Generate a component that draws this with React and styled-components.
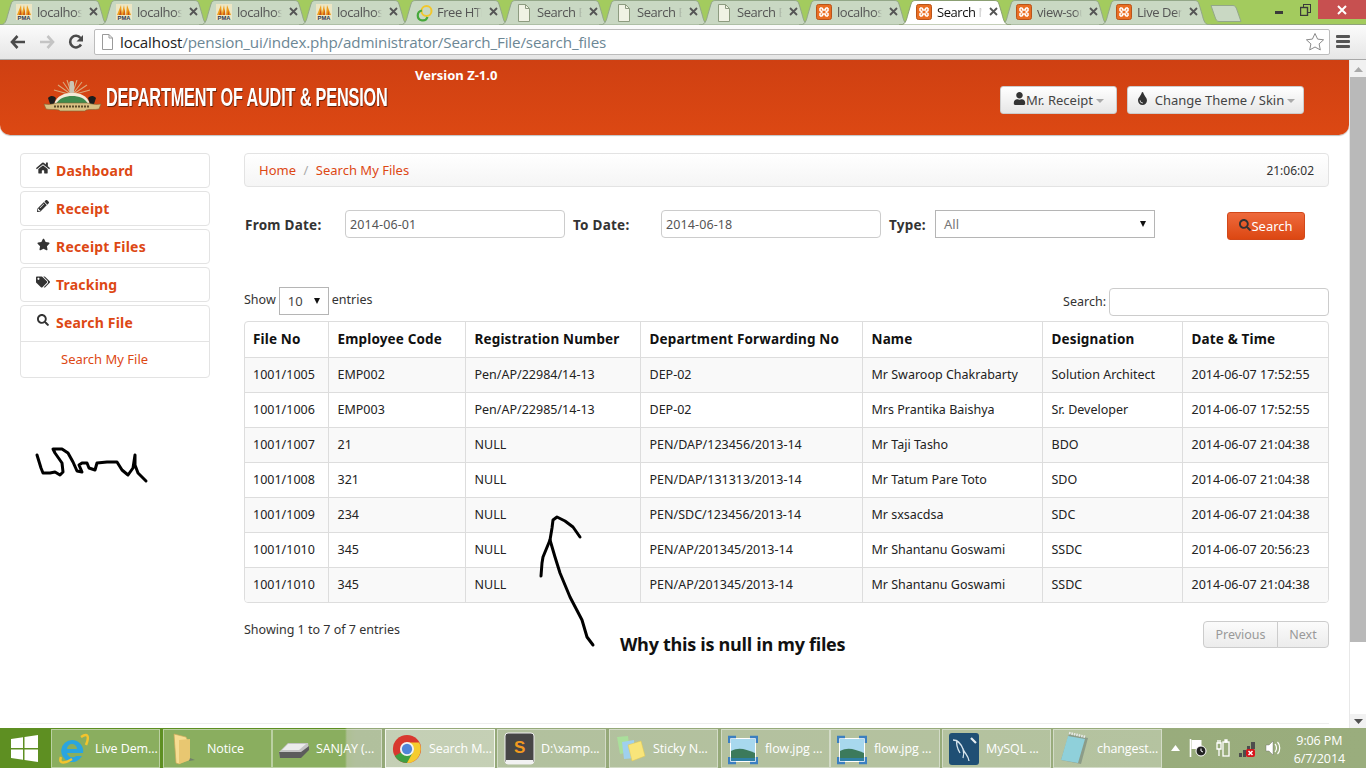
import React from "react";
import styled, { createGlobalStyle } from "styled-components";
import { FaHome, FaPencilAlt, FaStar, FaTags, FaSearch, FaUser, FaTint } from "react-icons/fa";

const Global = createGlobalStyle`
  html, body { margin: 0; padding: 0; background: #fff; overflow: hidden; }
  * { box-sizing: border-box; }
  body { font-family: "Noto Sans", "Open Sans", sans-serif; }
`;

const Screen = styled.div`
  width: 1366px; height: 768px; display: flex; flex-direction: column; overflow: hidden; position: relative;
`;

/* ---------- browser chrome ---------- */
const TabStrip = styled.div`
  height: 25px; flex: none; background: #a3cb5e; display: flex; padding-left: 5px; position: relative;
  border-bottom: 1px solid #8fa37a;
`;
const Tab = styled.div`
  position: relative; width: 100px; height: 25px; flex: none; z-index: ${p => (p.$active ? 2 : 1)};
  display: flex; align-items: center; padding: 0 0 2px 11px; font-size: 13px;
  color: ${p => (p.$active ? "#111" : "#555")}; font-family: "Open Sans", sans-serif;
`;
const TabShape = styled.svg`
  position: absolute; left: -6px; top: 0; width: 112px; height: 25px;
`;
const TabIcon = styled.span`position: relative; width: 16px; height: 16px; flex: none; display: block; svg { display: block; }`;
const TabTitle = styled.span`
  position: relative; width: 45px; margin-left: 5px; white-space: nowrap;
  letter-spacing: -0.45px;
  mask-image: linear-gradient(to right, #000 85%, transparent);
`;
const TabClose = styled.span`
  position: relative; margin-left: 7px; width: 9px; height: 9px; display: block; svg { display: block; }
`;
const NewTab = styled.svg`position: relative; margin-left: 5px; margin-top: 5px; width: 32px; height: 17px;`;
const WindowControls = styled.div`
  position: absolute; right: 0; top: 0; display: flex; align-items: flex-start; height: 19px;
`;
const WinBtn = styled.div`
  width: ${p => p.$w}px; height: 19px; display: flex; align-items: center; justify-content: center;
  background: ${p => p.$bg || "transparent"};
`;

const Toolbar = styled.div`
  height: 35px; flex: none; display: flex; align-items: center; padding: 0 5px 1px 0;
  background: linear-gradient(#fbfbfb, #e6e6e6); border-bottom: 1px solid #a8a8a8;
`;
const NavBtn = styled.span`
  width: 29px; height: 24px; display: flex; align-items: center; justify-content: center; flex: none;
  &:first-child { margin-left: 3px; }
`;
const Omnibox = styled.div`
  margin-left: 4px; width: 1236px; height: 26px; background: #fff; border: 1px solid #bcbcbc; border-radius: 2px;
  display: flex; align-items: center; padding: 0 4px 0 6px; font-size: 15.2px; font-family: "Open Sans", sans-serif;
  letter-spacing: -0.15px;
`;
const UrlHost = styled.span`color: #222; margin-left: 6px;`;
const UrlPath = styled.span`color: #6c8795; flex: 1;`;
const MenuIcon = styled.div`
  margin-left: 6px; width: 14px; height: 13px; display: flex; flex-direction: column; justify-content: space-between;
  span { display: block; height: 3px; background: #555; border-radius: 1px; }
`;

/* ---------- page ---------- */
const Viewport = styled.div`flex: 1; display: flex; min-height: 0;`;
const Page = styled.div`
  width: 1349px; flex: none; display: flex; flex-direction: column; position: relative; color: #333; font-size: 13px;
`;
const Scrollbar = styled.div`
  width: 17px; flex: none; background: #f1f1f1; display: flex; flex-direction: column; align-items: center; position: relative;
  border-left: 1px solid #e8e8e8;
`;
const ScrollArrow = styled.svg`width: 9px; height: 5px; flex: none; margin: ${p => p.$m};`;
const ScrollThumb = styled.div`width: 16px; height: 565px; background: #b9b9b9; flex: none;`;
const ScrollRest = styled.div`flex: 1; width: 16px; background: #fff;`;

const Header = styled.header`
  height: 75px; flex: none; position: relative; display: flex; align-items: flex-start;
  background: linear-gradient(#cf4012, #dc4813); border-radius: 0 0 10px 10px;
  box-shadow: 0 1px 1px rgba(0,0,0,.25); padding: 20px 45px 0 43px;
`;
const LogoMark = styled.svg`width: 60px; height: 34px; flex: none;`;
const LogoText = styled.div`
  color: #fff; font-family: "Liberation Sans", sans-serif; font-weight: 700; font-size: 26px; line-height: 30px;
  white-space: nowrap; width: 0; margin: 2px 0 0 3px; transform: scaleX(.627); transform-origin: left center;
  text-shadow: 1px 1px 1px rgba(0,0,0,.55); letter-spacing: -0.3px;
`;
const Version = styled.div`
  color: #fff; font-weight: 700; font-size: 13px; margin: -14px 0 0 309px; white-space: nowrap;
`;
const HeaderBtns = styled.div`margin-left: auto; display: flex; gap: 10px; padding-top: 6px;`;
const HeaderBtn = styled.div`
  height: 28px; width: ${p => p.$w}px; display: flex; align-items: center; justify-content: center; gap: 0;
  background: linear-gradient(#fff, #e6e6e6); border: 1px solid #ccc; border-radius: 3px; color: #444; font-size: 13px;
  white-space: nowrap;
  svg { color: #333; flex: none; margin-top: -3px; }
`;
const Caret = styled.span`
  display: inline-block; margin-left: 3px; margin-top: 1px; border-left: 4px solid transparent; border-right: 4px solid transparent;
  border-top: 4px solid #aaa;
`;

const Body = styled.div`flex: 1; display: flex; gap: 34px; padding: 18px 20px 0; min-height: 0;`;
const Sidebar = styled.nav`width: 190px; flex: none; display: flex; flex-direction: column; gap: 3px;`;
const NavCard = styled.div`border: 1px solid #e3e3e3; border-radius: 4px; background: #fff;`;
const NavItem = styled.div`
  height: ${p => p.$h || 33}px; display: flex; align-items: center; padding: 0 0 ${p => (p.$h ? 2 : 0)}px 15px; gap: 6px; font-weight: 700; font-size: 14px;
  letter-spacing: .2px; color: #dd4814;
`;
const NavIcon = styled.span`
  width: 14px; flex: none; display: flex; justify-content: center; color: #333; margin-top: -5px;
`;
const NavSub = styled.div`
  height: 36px; border-top: 1px solid #e3e3e3; color: #dd4814; font-size: 13px; display: flex; align-items: center; padding: 0 0 2px 40px;
`;
const Main = styled.main`width: 1085px; flex: none; display: flex; flex-direction: column;`;
const Breadcrumb = styled.div`
  height: 34px; border: 1px solid #e3e3e3; border-radius: 4px; background: linear-gradient(#fff, #f5f5f5);
  display: flex; align-items: center; padding: 0 14px; font-size: 13px;
`;
const Crumb = styled.span`color: #dd4814;`;
const CrumbSep = styled.span`color: #aaa; margin: 0 7.5px;`;
const Clock = styled.span`margin-left: auto; font-size: 12px; color: #333;`;

const FilterRow = styled.div`margin-top: 23px; display: flex; align-items: flex-start; height: 30px;`;
const FilterLabel = styled.label`
  width: ${p => p.$w}px; margin-left: ${p => p.$ml}px; flex: none; font-weight: 700; font-size: 13.5px; letter-spacing: .25px; color: #333; padding-top: 6px;
`;
const TextField = styled.input`
  width: ${p => p.$w}px; height: 28px; flex: none; border: 1px solid #ccc; border-radius: 4px; background: #fff; padding: 0 4px;
  font: 12.5px "Noto Sans", sans-serif; letter-spacing: .1px; color: #555; outline: none;
`;
const SelectBox = styled.div`
  width: ${p => p.$w}px; height: 28px; flex: none; border: 1px solid #b5b5b5; background: #fff; display: flex; align-items: center;
  justify-content: space-between; padding: 0 8px; font-size: 13px; color: ${p => p.$c};
`;
const SelectArrow = styled.span`
  border-left: 3.5px solid transparent; border-right: 3.5px solid transparent; border-top: 6px solid #111;
`;
const SearchBtn = styled.div`
  margin: 2px 0 0 72px; width: 78px; height: 28px; display: flex; align-items: center; justify-content: center;
  background: linear-gradient(#ee6a3d, #dc4712); border: 1px solid #d2481a; border-radius: 3px; color: #fff; font-size: 13px;
  svg { color: #333; margin-top: -3px; }
`;
const TableTools = styled.div`margin-top: 47px; height: 29px; display: flex; justify-content: space-between; align-items: flex-start;`;
const ToolGroup = styled.div`display: flex; align-items: center; gap: 3px; font-size: 12.5px; color: #333;`;
const ToolText = styled.span`margin-top: -4px;`;
const TableWrap = styled.div`margin-top: 5px; border: 1px solid #ddd; border-radius: 4px; overflow: hidden;`;
const Grid = styled.table`width: 100%; table-layout: fixed; border-collapse: collapse; font-size: 12.5px; color: #222;`;
const Th = styled.th`
  height: 35px; padding: 0 8px 0 9px; text-align: left; font-weight: 700; font-size: 13.5px; letter-spacing: .15px; color: #111; border-left: 1px solid #ddd;
  white-space: nowrap; &:first-child { border-left: 0; padding-left: 8px; }
`;
const Row = styled.tr`background: ${p => (p.$odd ? "#f9f9f9" : "#fff")};`;
const Td = styled.td`
  height: 35px; padding: 0 8px 0 9px; border-top: 1px solid #ddd; border-left: 1px solid #ddd; white-space: nowrap;
  &:first-child { border-left: 0; padding-left: 8px; }
`;
const TableFoot = styled.div`margin-top: 18px; display: flex; justify-content: space-between; align-items: flex-start; font-size: 12.5px;`;
const FootInfo = styled.span``;
const Pager = styled.div`display: flex;`;
const PageBtn = styled.div`
  height: 27px; width: ${p => p.$w}px; display: flex; align-items: center; justify-content: center; color: #999; font-size: 12.5px;
  background: linear-gradient(#fbfbfb, #ececec); border: 1px solid #ccc; margin-left: -1px;
  border-radius: ${p => p.$r};
`;
const PageRule = styled.div`height: 5px; margin: 0 20px; border-top: 1px solid #eee; flex: none;`;

const Ink = styled.svg`
  position: absolute; left: 0; top: 0; width: 1349px; height: 668px; pointer-events: none;
  polyline { fill: none; stroke: #000; stroke-width: 3; stroke-linecap: round; stroke-linejoin: round; }
`;
const Note = styled.div`
  position: absolute; left: 620px; top: 572px; font-weight: 700; font-size: 18px; color: #111; white-space: nowrap; letter-spacing: -0.3px;
  font-family: "Open Sans", sans-serif;
`;

/* ---------- taskbar ---------- */
const Taskbar = styled.footer`
  height: 40px; flex: none; display: flex; align-items: stretch;
  background: linear-gradient(to right, #5e8f22 0, #5e8f22 345px, #8fa86b 347px, #94a878 356px, #9aad7d 100%);
`;
const StartBtn = styled.div`width: 51px; flex: none; display: flex; align-items: center; justify-content: center; padding-right: 2px;`;
const Tiles = styled.div`display: flex; padding-top: 1px;`;
const Tile = styled.div`
  width: ${p => p.$w}px; height: 39px; flex: none; display: flex; align-items: center; padding-left: 4px; gap: 5px; color: #fff; font-size: 12.5px;
  font-family: "Open Sans", sans-serif; white-space: nowrap; letter-spacing: -0.1px; margin-right: ${p => p.$mr}px;
  border: 1px solid ${p => (p.$active ? "#f3f6ee" : "rgba(255,255,255,.42)")};
  background: rgba(255,255,255,${p => (p.$active ? 0.45 : 0.28)});
`;
const TileIcon = styled.span`width: 34px; flex: none; display: flex; justify-content: center; align-items: center;`;
const Tray = styled.div`flex: 1; display: flex; align-items: center; padding-left: 9px; gap: 9px;`;
const TrayClock = styled.div`
  margin-left: auto; padding: 3px 21px 0 0; color: #fff; font-size: 12.5px; text-align: center; line-height: 18px; font-family: "Open Sans", sans-serif;
  letter-spacing: -0.1px;
`;

/* ---------- icons ---------- */
const PmaIcon = () => (
  <svg width="16" height="16" viewBox="0 0 16 16">
    <rect width="16" height="16" fill="#ece6c4" />
    <path d="M1 11 5 1l1 10zM5.500 11 8 1l1.500 10zM10 11l1-10 4 10z" fill="#ef9d1c" />
    <path d="M3 11 5 5l.5 6zM7 11l1.500-6 .5 6zM11.500 11l.5-5 1.500 5z" fill="#c8541a" />
    <text x="8" y="16" textAnchor="middle" fontSize="5.800" fontWeight="700" fill="#2c3550" fontFamily="Liberation Sans">PMA</text>
  </svg>
);
const XamppIcon = () => (
  <svg width="16" height="16" viewBox="0 0 16 16">
    <rect x=".5" y=".5" width="15" height="15" rx="2" fill="#ea6d22" stroke="#b9541a" />
    <path d="M4 4h2.500M9.500 4H12M4 12h2.500M9.500 12H12M4 4v2.500l2 1.500-2 1.500V12M12 4v2.500L10 8l2 1.500V12M6.500 4v2h3V4M6.500 12v-2h3v2" stroke="#fff" strokeWidth="1.500" fill="none" />
  </svg>
);
const DocIcon = () => (
  <svg width="16" height="18" viewBox="0 0 16 18">
    <path d="M2.500 .5h7l4 4v13h-11z" fill="#f0f2e4" stroke="#8d9b80" />
    <path d="M9.500 .5v4h4" fill="none" stroke="#8d9b80" />
  </svg>
);
const RingIcon = () => (
  <svg width="18" height="18" viewBox="0 0 18 18">
    <circle cx="10.500" cy="7" r="5" fill="none" stroke="#f2c72c" strokeWidth="2" />
    <path d="M6 6.500A5 5 0 1 0 11.500 13" fill="none" stroke="#46a83a" strokeWidth="2.200" />
  </svg>
);
const tabIcons = { pma: PmaIcon, xampp: XamppIcon, doc: DocIcon, ring: RingIcon };

const IeIcon = () => (
  <svg width="32" height="34" viewBox="0 0 32 34">
    <path d="M15 8a11 11 0 1 0 10 16h-6a5.500 5.500 0 0 1-9-3h16a11 11 0 0 0-11-13zm-5 9a5 5 0 0 1 10 0z" fill="#2aa5e0" />
    <path d="M4 25C1 33 9 31 15 27M24 5c6-4 9-2 5 8" fill="none" stroke="#f4c42c" strokeWidth="2.500" />
  </svg>
);
const FolderIcon = () => (
  <svg width="30" height="34" viewBox="0 0 30 34">
    <path d="M4 2l12 3 2 4v19l-9 4-3-1z" fill="#f7dd92" stroke="#cba959" strokeWidth=".7" />
    <path d="M9 8l11-1v21l-11 4z" fill="#e8c771" />
    <path d="M20 26l5 2-6 1z" fill="#70806a" />
  </svg>
);
const DriveIcon = () => (
  <svg width="32" height="22" viewBox="0 0 32 22">
    <path d="M1 14 10 5h20l1 6-8 8H2z" fill="#c4c4c4" />
    <path d="M1 14h22l8-6v4l-8 8H2z" fill="#5c5c5c" />
    <path d="M10 6h18l-7 6H4z" fill="#ececec" />
  </svg>
);
const ChromeIcon = () => (
  <svg width="30" height="32" viewBox="0 0 32 32">
    <circle cx="16" cy="16" r="15" fill="#d8382e" />
    <path d="M16 16 3 23.500A15 15 0 0 0 16 31l9-14z" fill="#3f9f42" />
    <path d="M16 9h13a15 15 0 0 1-13 22l7-13z" fill="#f5cc2f" />
    <circle cx="16" cy="16" r="7.500" fill="#f3f3f3" />
    <circle cx="16" cy="16" r="5.500" fill="#4f85d9" />
  </svg>
);
const SublimeIcon = () => (
  <svg width="31" height="34" viewBox="0 0 31 34">
    <rect x="1" y="1" width="29" height="31" rx="3" fill="#464646" stroke="#eee" />
    <rect x="2" y="28" width="27" height="4" fill="#f2f2f2" />
    <text x="15.500" y="21" textAnchor="middle" fontSize="17" fontWeight="700" fill="#f29a1f" fontFamily="Liberation Sans">S</text>
  </svg>
);
const StickyIcon = () => (
  <svg width="32" height="32" viewBox="0 0 32 32">
    <path d="M2 4l11-1 2 16-10 2z" fill="#a8e29a" opacity=".9" />
    <path d="M7 9l12-2 1 18-11 1z" fill="#9fd0ee" />
    <path d="M13 12l13-4 4 15-13 5z" fill="#f8e57a" stroke="#e3c94e" strokeWidth=".5" />
  </svg>
);
const PictureIcon = () => (
  <svg width="30" height="32" viewBox="0 0 30 32">
    <rect x="2" y="5" width="26" height="24" fill="#fff" />
    <rect x="3" y="6" width="24" height="22" fill="#a8d8ee" />
    <path d="M3 18c8-4 14-2 24 2v8H3z" fill="#3c7a5c" />
    <path d="M3 25h24v3H3z" fill="#2f80a6" />
    <path d="M1 10V4h7M22 4h7v6M1 24v6h7M22 30h7v-6" fill="none" stroke="#3b7fc0" strokeWidth="2.500" />
  </svg>
);
const MysqlIcon = () => (
  <svg width="32" height="34" viewBox="0 0 32 34">
    <rect x="1" y="1" width="30" height="32" rx="3" fill="#1f4f74" />
    <path d="M5 8c5 0 8 4 10 9s5 6 6 12M9 8c-1 4 0 8 3 13M15 17c1 3 1 6 0 9" fill="none" stroke="#d8e6ee" strokeWidth="1.300" />
    <path d="M23 6l5 5" stroke="#e6eef2" strokeWidth="2.200" />
  </svg>
);
const NotepadIcon = () => (
  <svg width="32" height="36" viewBox="0 0 32 36">
    <path d="M10 3l19 4-7 26-20-4z" fill="#8c9c88" />
    <path d="M9 5l17 3-7 24-17-3z" fill="#8fd0da" />
    <path d="M10 2l17 4" stroke="#e8e8e8" strokeWidth="2.500" strokeDasharray="1.500 1" />
  </svg>
);
const WinLogo = () => (
  <svg width="27" height="27" viewBox="0 0 27 27" fill="#fff">
    <path d="M0 4l12-1.700V13H0zM13.500 2 27 0v13H13.500zM0 14.500h12v10.300L0 23zM13.500 14.500H27V27l-13.500-2z" />
  </svg>
);

const ink = {
  why: "37,455 41,468 43,473 50,473 55,472 60,475 63,472 62,463 55,453 53,449 62,449 68,453 73,462 77,471 82,472 79,465 82,463 87,463 89,468 95,470 97,463 107,462 117,462 122,470 128,475 133,468 135,455 135,465 138,473 146,481",
  arrow: "593,645 587,637 582,620 570,597 560,573 555,557 550,540 552,528 553,520 557,517 565,521 573,527 580,537",
  arrow2: "550,540 543,557 542,563 541,576",
};

const tabs = [
  ["pma", "localhost"], ["pma", "localhost"], ["pma", "localhost"], ["pma", "localhost"],
  ["ring", "Free HTM"], ["doc", "Search B"], ["doc", "Search B"], ["doc", "Search B"],
  ["xampp", "localhos"], ["xampp", "Search M", true], ["xampp", "view-sou"], ["xampp", "Live Den"],
];
const nav = [
  [FaHome, "Dashboard", 14], [FaPencilAlt, "Receipt", 12], [FaStar, "Receipt Files", 13], [FaTags, "Tracking", 14],
];
const columns = [
  ["File No", 83], ["Employee Code", 137], ["Registration Number", 175], ["Department Forwarding No", 222],
  ["Name", 180], ["Designation", 140], ["Date & Time", 148],
];
const rows = [
  ["1001/1005", "EMP002", "Pen/AP/22984/14-13", "DEP-02", "Mr Swaroop Chakrabarty", "Solution Architect", "2014-06-07 17:52:55"],
  ["1001/1006", "EMP003", "Pen/AP/22985/14-13", "DEP-02", "Mrs Prantika Baishya", "Sr. Developer", "2014-06-07 17:52:55"],
  ["1001/1007", "21", "NULL", "PEN/DAP/123456/2013-14", "Mr Taji Tasho", "BDO", "2014-06-07 21:04:38"],
  ["1001/1008", "321", "NULL", "PEN/DAP/131313/2013-14", "Mr Tatum Pare Toto", "SDO", "2014-06-07 21:04:38"],
  ["1001/1009", "234", "NULL", "PEN/SDC/123456/2013-14", "Mr sxsacdsa", "SDC", "2014-06-07 21:04:38"],
  ["1001/1010", "345", "NULL", "PEN/AP/201345/2013-14", "Mr Shantanu Goswami", "SSDC", "2014-06-07 20:56:23"],
  ["1001/1010", "345", "NULL", "PEN/AP/201345/2013-14", "Mr Shantanu Goswami", "SSDC", "2014-06-07 21:04:38"],
];
const tiles = [
  [IeIcon, "Live Dem...", 109, 3], [FolderIcon, "Notice", 109, 0], [DriveIcon, "SANJAY (...", 110, 3],
  [ChromeIcon, "Search M...", 110, 2, true], [SublimeIcon, "D:\\xamp...", 109, 3], [StickyIcon, "Sticky N...", 109, 3],
  [PictureIcon, "flow.jpg ...", 109, 0], [PictureIcon, "flow.jpg ...", 110, 2], [MysqlIcon, "MySQL ...", 109, 2], [NotepadIcon, "changest...", 109, 0],
];

export default function App() {
  return (
    <Screen>
      <Global />
      <TabStrip>
        {tabs.map(([icon, title, active], i) => {
          const Icon = tabIcons[icon];
          return (
            <Tab key={i} $active={active}>
              <TabShape viewBox="0 0 112 25">
                <path d="M0 25C6 25 7 22 9 14L12 4C13 1 14 .5 17 .5H95C98 .5 99 1 100 4L103 14C105 22 106 25 112 25Z"
                  fill={active ? "#fff" : "#c9d8c3"} stroke={active ? "#8b9f73" : "#93a788"} />
              </TabShape>
              <TabIcon><Icon /></TabIcon>
              <TabTitle>{title}</TabTitle>
              <TabClose>
                <svg width="9" height="9" viewBox="0 0 9 9"><path d="M1 1l7 7M8 1 1 8" stroke="#555" strokeWidth="1.800" /></svg>
              </TabClose>
            </Tab>
          );
        })}
        <NewTab viewBox="0 0 32 17">
          <path d="M1 .5H23C25 .5 26 2 27 5L31 16.500H9C7 16.500 6 15 5 12z" fill="#c9d8c3" stroke="#93a788" />
        </NewTab>
        <WindowControls>
          <WinBtn $w={26}><svg width="10" height="10" viewBox="0 0 10 10"><rect x="1" y="6" width="8" height="3" fill="#3a3a3a" /></svg></WinBtn>
          <WinBtn $w={26}><svg width="11" height="12" viewBox="0 0 11 12" fill="none" stroke="#3a3a3a"><rect x="3.500" y=".5" width="7" height="8" /><rect x=".5" y="3.500" width="7" height="8" fill="#a3cb5e" strokeWidth="1.400" /></svg></WinBtn>
          <WinBtn $w={48} $bg="#c75050"><svg width="10" height="10" viewBox="0 0 10 10"><path d="M1 1l8 8M9 1 1 9" stroke="#fff" strokeWidth="2" /></svg></WinBtn>
        </WindowControls>
      </TabStrip>

      <Toolbar>
        <NavBtn>
          <svg width="16" height="14" viewBox="0 0 16 14"><path d="M7.500 1 2 7l5.500 6M2.500 7H15" fill="none" stroke="#4a4a4a" strokeWidth="2.600" /></svg>
        </NavBtn>
        <NavBtn>
          <svg width="16" height="14" viewBox="0 0 16 14"><path d="M8.500 1 14 7l-5.500 6M13.500 7H1" fill="none" stroke="#c4c4c4" strokeWidth="2.600" /></svg>
        </NavBtn>
        <NavBtn>
          <svg width="16" height="16" viewBox="0 0 16 16"><path d="M13 10.500A5.800 5.800 0 1 1 12.500 4" fill="none" stroke="#4a4a4a" strokeWidth="2.600" /><path d="M15 1v6.500H8.500z" fill="#4a4a4a" /></svg>
        </NavBtn>
        <Omnibox>
          <svg width="13" height="16" viewBox="0 0 13 16"><path d="M1.500 .5h6.500l3.500 3.500v11.500h-10z" fill="#fff" stroke="#9a9a9a" /><path d="M8 .5V4h3.500" fill="none" stroke="#9a9a9a" /></svg>
          <UrlHost>localhost</UrlHost>
          <UrlPath>/pension_ui/index.php/administrator/Search_File/search_files</UrlPath>
          <svg width="20" height="20" viewBox="0 0 20 20"><path d="M10 1.500l2.600 5.600 6 .7-4.500 4.100 1.200 6L10 15l-5.300 2.900 1.200-6L1.400 7.800l6-.7z" fill="#fff" stroke="#8a8a8a" /></svg>
        </Omnibox>
        <MenuIcon><span /><span /><span /></MenuIcon>
      </Toolbar>

      <Viewport>
        <Page>
          <Header>
            <LogoMark viewBox="0 0 60 34">
              <path d="M29 15 15 5M29 15 20 2M29 15 24 0M29 15 34 0M29 15 39 2M29 15 44 5M29 15 11 10M29 15 47 10" stroke="#d9a87c" strokeWidth="1.100" />
              <path d="M11 24C14 15 22 13 29 13C37 13 44 15 47 24z" fill="#f2ead8" />
              <path d="M13 24C16 18 23 16 29 16C36 16 42 18 45 24z" fill="#3f8a4c" />
              <rect x="26.500" y="1" width="4.500" height="12" rx="1.500" fill="#c9c4b4" />
              <path d="M5 18c3-3 6-2 8 0l-2 6H7zM53 18c-3-3-6-2-8 0l2 6h4z" fill="#1d1d1d" />
              <path d="M1 24c5 1 9 0 13-1h30c5 1 9 2 14 1l-2 5c-5 1-9 0-13 1l-1 1H17l-1-1c-5-1-9 0-13-1z" fill="#d9c083" stroke="#7d6637" strokeWidth=".6" />
              <path d="M11 26.500h36" stroke="#5a4a28" strokeWidth="1.800" strokeDasharray="2 1" />
            </LogoMark>
            <LogoText>DEPARTMENT OF AUDIT &amp; PENSION</LogoText>
            <Version>Version Z-1.0</Version>
            <HeaderBtns>
              <HeaderBtn $w={117}><FaUser size={13} />Mr. Receipt<Caret /></HeaderBtn>
              <HeaderBtn $w={177}><FaTint size={13} style={{ marginRight: 6 }} />Change Theme / Skin<Caret /></HeaderBtn>
            </HeaderBtns>
          </Header>

          <Body>
            <Sidebar>
              {nav.map(([Icon, label, size]) => (
                <NavCard key={label}>
                  <NavItem><NavIcon><Icon size={size} /></NavIcon>{label}</NavItem>
                </NavCard>
              ))}
              <NavCard>
                <NavItem $h={35}><NavIcon><FaSearch size={12} /></NavIcon>Search File</NavItem>
                <NavSub>Search My File</NavSub>
              </NavCard>
            </Sidebar>

            <Main>
              <Breadcrumb>
                <Crumb>Home</Crumb><CrumbSep>/</CrumbSep><Crumb>Search My Files</Crumb>
                <Clock>21:06:02</Clock>
              </Breadcrumb>
              <FilterRow>
                <FilterLabel $w={100} $ml={1}>From Date:</FilterLabel>
                <TextField $w={220} readOnly value="2014-06-01" />
                <FilterLabel $w={88} $ml={8}>To Date:</FilterLabel>
                <TextField $w={220} readOnly value="2014-06-18" />
                <FilterLabel $w={46} $ml={8}>Type:</FilterLabel>
                <SelectBox $w={220} $c="#777">All<SelectArrow /></SelectBox>
                <SearchBtn><FaSearch size={12} />Search</SearchBtn>
              </FilterRow>
              <TableTools>
                <ToolGroup>
                  <ToolText>Show</ToolText>
                  <SelectBox $w={50} $c="#444">10<SelectArrow /></SelectBox>
                  <ToolText>entries</ToolText>
                </ToolGroup>
                <ToolGroup>
                  <span>Search:</span>
                  <TextField $w={220} readOnly value="" style={{ marginTop: 1 }} />
                </ToolGroup>
              </TableTools>
              <TableWrap>
                <Grid>
                  <colgroup>{columns.map(([c, w]) => <col key={c} width={w} />)}</colgroup>
                  <thead><tr>{columns.map(([c]) => <Th key={c}>{c}</Th>)}</tr></thead>
                  <tbody>
                    {rows.map((r, i) => (
                      <Row key={i} $odd={i % 2 === 0}>
                        {r.map((v, j) => <Td key={j}>{v}</Td>)}
                      </Row>
                    ))}
                  </tbody>
                </Grid>
              </TableWrap>
              <TableFoot>
                <FootInfo>Showing 1 to 7 of 7 entries</FootInfo>
                <Pager>
                  <PageBtn $w={75} $r="4px 0 0 4px">Previous</PageBtn>
                  <PageBtn $w={52} $r="0 4px 4px 0">Next</PageBtn>
                </Pager>
              </TableFoot>
            </Main>
          </Body>
          <PageRule />

          <Ink viewBox="0 60 1349 668">
            <polyline points={ink.why} />
            <polyline points={ink.arrow} />
            <polyline points={ink.arrow2} />
          </Ink>
          <Note>Why this is null in my files</Note>
        </Page>
        <Scrollbar>
          <ScrollArrow $m="7px 0 5px" viewBox="0 0 9 5"><path d="M4.500 0 9 5H0z" fill="#a9a9a9" /></ScrollArrow>
          <ScrollThumb />
          <ScrollRest />
          <ScrollArrow $m="5px 0 4px" viewBox="0 0 9 5"><path d="M0 0h9L4.500 5z" fill="#505050" /></ScrollArrow>
        </Scrollbar>
      </Viewport>

      <Taskbar>
        <StartBtn><WinLogo /></StartBtn>
        <Tiles>
          {tiles.map(([Icon, label, w, mr, active], i) => (
            <Tile key={i} $w={w} $mr={mr} $active={active}><TileIcon><Icon /></TileIcon>{label}</Tile>
          ))}
        </Tiles>
        <Tray>
          <svg width="9" height="6" viewBox="0 0 9 6"><path d="M4.500 0 9 6H0z" fill="#fff" /></svg>
          <svg width="18" height="20" viewBox="0 0 18 20"><path d="M1.500 1v18" stroke="#fff" strokeWidth="1.600" /><path d="M2.500 2h10v9h-10z" fill="#fff" /><circle cx="12" cy="13" r="5" fill="#222" stroke="#fff" /><path d="M12 10.500V13l2 1" stroke="#fff" fill="none" /></svg>
          <svg width="14" height="20" viewBox="0 0 14 20" fill="none" stroke="#fff" strokeWidth="1.300"><path d="M1 5h4v6H1zM2 5V2M4 5V2M3 11v7" /><rect x="7" y="4" width="6" height="14" /><path d="M9 2h2v2H9z" fill="#fff" /></svg>
          <svg width="17" height="17" viewBox="0 0 17 17"><path d="M0 13h3v4H0zM4 10h3v7H4zM8 6h3v5H8zM12 2h4v7h-4z" fill="#4d4d4d" /><rect x="7" y="9" width="9" height="8" rx="2" fill="#d8141c" /><path d="M9.500 11l4 4M13.500 11l-4 4" stroke="#fff" strokeWidth="1.500" /></svg>
          <svg width="16" height="18" viewBox="0 0 16 18"><path d="M1 6h3l4-4v14l-4-4H1z" fill="#fff" stroke="#666" strokeWidth=".4" /><path d="M10 5c2 2 2 6 0 8M12.500 3c3 3 3 9 0 12" fill="none" stroke="#fff" strokeWidth="1.200" /></svg>
          <TrayClock>9:06 PM<br />6/7/2014</TrayClock>
        </Tray>
      </Taskbar>
    </Screen>
  );
}
